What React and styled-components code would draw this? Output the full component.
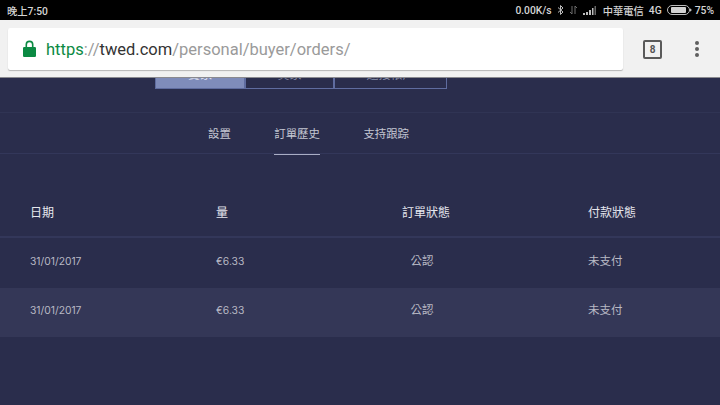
import React from "react";
import styled, { createGlobalStyle } from "styled-components";

const cjk = `"Noto Sans CJK TC", "Noto Sans CJK SC", sans-serif`;

const GlobalStyle = createGlobalStyle`
  html, body {
    margin: 0;
    padding: 0;
    background: #2a2d4c;
  }
  body {
    font-family: Inter, ${cjk};
  }
`;

const Screen = styled.div`
  width: 720px;
  height: 405px;
  overflow: hidden;
  display: flex;
  flex-direction: column;
  background: #2a2d4c;
`;

const StatusBar = styled.div`
  height: 20px;
  flex: none;
  background: #000;
  color: #d4d4d4;
  font-family: Roboto, ${cjk};
  font-size: 10.3px;
  font-weight: 500;
  display: flex;
  align-items: center;
  justify-content: space-between;
  padding: 0 6px 0 7px;
`;

const StatusRight = styled.div`
  display: flex;
  align-items: center;
`;

const StatusText = styled.span`
  margin-right: ${(p) => p.$gap || 0}px;
`;

const StatusIcon = styled.svg`
  display: block;
  margin-right: ${(p) => p.$gap || 0}px;
`;

const Toolbar = styled.div`
  height: 58px;
  flex: none;
  box-sizing: border-box;
  background: #f1f1f1;
  box-shadow: inset 0 -1px 0 #8a8a8f;
  display: flex;
  align-items: center;
  padding-left: 8px;
`;

const AddressBar = styled.div`
  width: 615px;
  height: 42px;
  box-sizing: border-box;
  background: #fff;
  border-radius: 2px;
  box-shadow: 0 1px 1px rgba(0, 0, 0, 0.25);
  display: flex;
  align-items: center;
  padding-left: 15px;
  font-family: Roboto, sans-serif;
  font-size: 16.5px;
  white-space: nowrap;
`;

const Lock = styled.svg`
  display: block;
  margin-right: 10px;
`;

const UrlPart = styled.span`
  color: ${(p) => p.$color};
`;

const TabCount = styled.div`
  width: 19px;
  height: 19px;
  margin-left: 20px;
  box-sizing: border-box;
  border: 2px solid #5a5a5a;
  border-radius: 2px;
  color: #555;
  font-family: Roboto, sans-serif;
  font-size: 10px;
  font-weight: 700;
  display: flex;
  align-items: center;
  justify-content: center;
`;

const MenuDots = styled.div`
  margin-left: 33px;
  display: flex;
  flex-direction: column;
  gap: 2px;
`;

const Dot = styled.span`
  width: 4px;
  height: 4px;
  border-radius: 50%;
  background: #5f5f5f;
`;

const Page = styled.div`
  flex: 1;
  display: flex;
  flex-direction: column;
`;

const RoleTabs = styled.div`
  height: 11px;
  flex: none;
  margin-left: 155px;
  display: flex;
  overflow: hidden;
`;

const RoleTab = styled.div`
  width: ${(p) => p.$width}px;
  height: 11px;
  box-sizing: border-box;
  background: ${(p) => (p.$active ? "#7f8cba" : "transparent")};
  border: 1px solid #5f6c9f;
  border-top: 0;
  color: ${(p) => (p.$active ? "#e4e6f0" : "#8b90aa")};
  font-size: 12px;
  line-height: 12px;
  text-align: center;
  overflow: hidden;
  display: flex;
  align-items: flex-end;
  justify-content: center;
  padding-bottom: 7px;
`;

const SubNav = styled.nav`
  height: 42px;
  flex: none;
  margin-top: 23px;
  box-sizing: border-box;
  border-top: 1px solid #303454;
  border-bottom: 1px solid #33375a;
  display: flex;
  padding-left: 208px;
  gap: 43.5px;
`;

const NavItem = styled.a`
  position: relative;
  height: 41px;
  display: flex;
  align-items: center;
  color: #c4c6d2;
  font-size: 11.4px;
  padding-bottom: 2px;
  box-sizing: border-box;
  ${(p) =>
    p.$active &&
    `
    &::after {
      content: "";
      position: absolute;
      left: 0;
      right: 0;
      bottom: -1px;
      height: 1px;
      background: #a9adc4;
    }
  `}
`;

const Table = styled.div`
  margin-top: 34px;
`;

const Row = styled.div`
  display: grid;
  grid-template-columns: 186px 186px 186px 1fr;
  padding-left: 30px;
  align-items: center;
  height: ${(p) => (p.$head ? 50 : 49.5)}px;
  box-sizing: border-box;
  background: ${(p) => (p.$alt ? "#343757" : "transparent")};
  border-bottom: ${(p) => (p.$head ? "2px solid #33375a" : "0")};
  padding-bottom: ${(p) => (p.$head ? 1 : 4)}px;
`;

const HeadCell = styled.div`
  color: #e6e7ee;
  font-size: 12px;
  font-family: ${cjk};
`;

const Cell = styled.div`
  color: #b8b9c4;
  font-size: ${(p) => (p.$cjk ? 11.5 : 10.3)}px;
  font-family: ${(p) => (p.$cjk ? cjk : "inherit")};
  margin-bottom: ${(p) => (p.$cjk ? 2 : 0)}px;
  width: ${(p) => (p.$center ? "40px" : "auto")};
  text-align: ${(p) => (p.$center ? "center" : "left")};
`;

const rows = [
  { date: "31/01/2017", amount: "€6.33", order: "公認", pay: "未支付" },
  { date: "31/01/2017", amount: "€6.33", order: "公認", pay: "未支付" },
];

export default function App() {
  return (
    <>
      <GlobalStyle />
      <Screen>
        <StatusBar>
          <span>晚上7:50</span>
          <StatusRight>
            <StatusText $gap={5}>0.00K/s</StatusText>
            <StatusIcon $gap={5} width="7" height="10" viewBox="0 0 7 10" fill="none" stroke="#bdbdbd" strokeWidth="1">
              <path d="M1 2.5 6 7 3.5 9.5v-9L6 3 1 7.5" />
            </StatusIcon>
            <StatusIcon $gap={5} width="9" height="10" viewBox="0 0 9 10" fill="none" stroke="#6e6e6e" strokeWidth="1">
              <path d="M3 1v8M1 7l2 2M6 9V1l2 2" />
            </StatusIcon>
            <StatusIcon $gap={7} width="13" height="9" viewBox="0 0 13 9" fill="#bdbdbd">
              <rect x="0" y="7" width="2" height="2" />
              <rect x="3" y="6" width="2" height="3" />
              <rect x="6" y="4" width="2" height="5" />
              <rect x="9" y="2" width="1.5" height="7" />
              <rect x="11.5" y="0" width="1.5" height="9" fill="#666" />
            </StatusIcon>
            <StatusText $gap={5}>中華電信</StatusText>
            <StatusText $gap={5}>4G</StatusText>
            <StatusIcon $gap={3} width="25" height="10" viewBox="0 0 25 10">
              <rect x="0.5" y="0.5" width="22" height="9" rx="4.5" fill="none" stroke="#bdbdbd" />
              <rect x="4" y="2" width="15" height="6" rx="1" fill="#d4d4d4" />
              <path d="M23 3.5c1 .3 1.5.8 1.5 1.5s-.5 1.2-1.5 1.5z" fill="#bdbdbd" />
            </StatusIcon>
            <span>75%</span>
          </StatusRight>
        </StatusBar>
        <Toolbar>
          <AddressBar>
            <Lock width="13" height="18" viewBox="0 0 13 18">
              <path
                d="M1.5 7h1V4.6a4 4 0 0 1 8 0V7h1A1.3 1.3 0 0 1 13 8.3v7.4a1.3 1.3 0 0 1-1.5 1.3h-10A1.3 1.3 0 0 1 0 15.7V8.3A1.3 1.3 0 0 1 1.5 7zm2.6 0h4.8V4.6a2.4 2.4 0 0 0-4.8 0z"
                fill="#0b8a43"
              />
            </Lock>
            <UrlPart $color="#0b8a43">https</UrlPart>
            <UrlPart $color="#9a9a9a">://</UrlPart>
            <UrlPart $color="#333">twed.com</UrlPart>
            <UrlPart $color="#9a9a9a">/personal/buyer/orders/</UrlPart>
          </AddressBar>
          <TabCount>8</TabCount>
          <MenuDots>
            <Dot />
            <Dot />
            <Dot />
          </MenuDots>
        </Toolbar>
        <Page>
          <RoleTabs>
            <RoleTab $active $width={90}>賣家</RoleTab>
            <RoleTab $width={89}>買家</RoleTab>
            <RoleTab $width={113}>連接帳戶</RoleTab>
          </RoleTabs>
          <SubNav>
            <NavItem>設置</NavItem>
            <NavItem $active>訂單歷史</NavItem>
            <NavItem>支持跟踪</NavItem>
          </SubNav>
          <Table>
            <Row $head>
              <HeadCell>日期</HeadCell>
              <HeadCell>量</HeadCell>
              <HeadCell>訂單狀態</HeadCell>
              <HeadCell>付款狀態</HeadCell>
            </Row>
            {rows.map((r, i) => (
              <Row key={i} $alt={i === 1}>
                <Cell>{r.date}</Cell>
                <Cell>{r.amount}</Cell>
                <Cell $center $cjk>{r.order}</Cell>
                <Cell $cjk>{r.pay}</Cell>
              </Row>
            ))}
          </Table>
        </Page>
      </Screen>
    </>
  );
}
